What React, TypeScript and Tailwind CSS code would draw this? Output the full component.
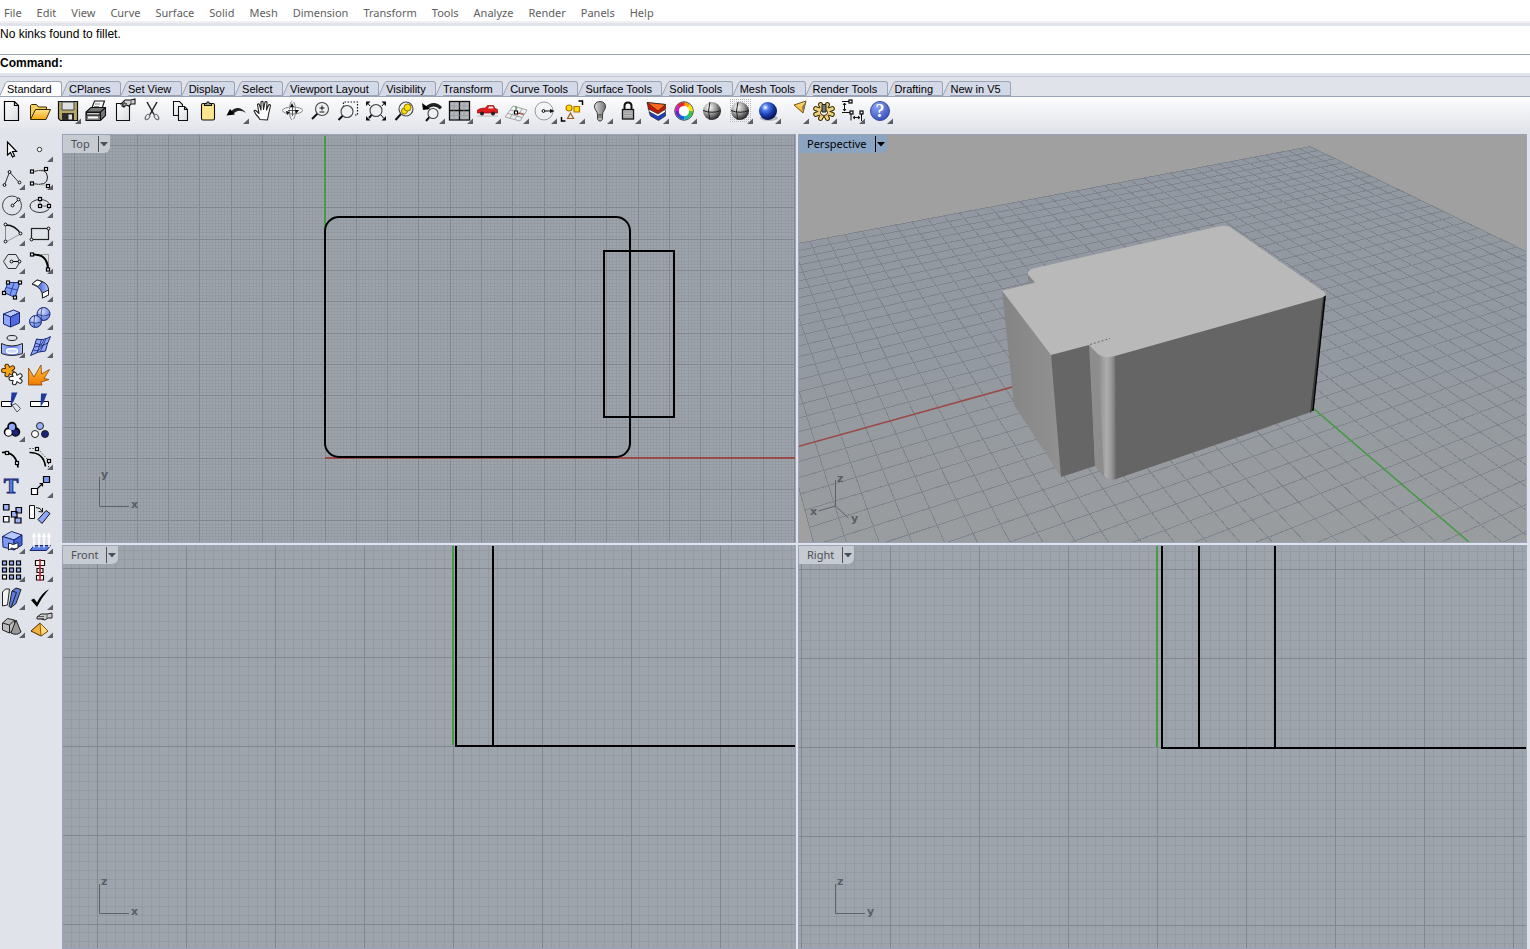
import { useState } from 'react'
import type { ReactNode } from 'react'

const MENUS = [
  'File', 'Edit', 'View', 'Curve', 'Surface', 'Solid', 'Mesh', 'Dimension',
  'Transform', 'Tools', 'Analyze', 'Render', 'Panels', 'Help',
]

const TABS = [
  'Standard', 'CPlanes', 'Set View', 'Display', 'Select', 'Viewport Layout', 'Visibility',
  'Transform', 'Curve Tools', 'Surface Tools', 'Solid Tools', 'Mesh Tools', 'Render Tools',
  'Drafting', 'New in V5',
]

type Tool = { name: string; art: ReactNode; flyout?: boolean }

// small square / round control points used by most of the curve icons
function Sq({ at }: { at: [number, number][] }) {
  return (
    <g fill="#fff" stroke="#000" strokeWidth="1.2">
      {at.map(([x, y]) => <rect key={`${x},${y}`} x={x - 1.5} y={y - 1.5} width="3" height="3" />)}
    </g>
  )
}

function Pt({ at }: { at: [number, number][] }) {
  return (
    <g fill="#fff" stroke="#000">
      {at.map(([x, y]) => <circle key={`${x},${y}`} cx={x} cy={y} r="1.4" />)}
    </g>
  )
}

function Lens({ x, y, r, tail }: { x: number; y: number; r: number; tail: [number, number] }) {
  const d = r * 0.72
  return (
    <g>
      <path d={`M${x - d} ${y + d}L${tail[0]} ${tail[1]}`} stroke="#111" strokeWidth="2" />
      <circle cx={x} cy={y} r={r} fill="#eef0f2" stroke="#444" strokeWidth="1.1" />
    </g>
  )
}

// knobbly disc: puzzle pieces and the options gear
function Cog({ x, y, rx, ry, n, w, fill, line }: {
  x: number; y: number; rx: number; ry: number; n: number; w: number; fill: string; line: string
}) {
  let d = ''
  for (let i = 0; i < n; i++) {
    const a = (i + 0.5) * 2 * Math.PI / n
    d += `M${x} ${y}L${(x + rx * Math.cos(a)).toFixed(2)} ${(y + ry * Math.sin(a)).toFixed(2)}`
  }
  return (
    <g strokeLinecap="round">
      <path d={d} stroke={line} strokeWidth={w + 2} />
      <ellipse cx={x} cy={y} rx={rx * 0.7} ry={ry * 0.7} fill={fill} stroke={line} />
      <path d={d} stroke={fill} strokeWidth={w} />
    </g>
  )
}

function WireSphere() {
  return (
    <g>
      <circle cx="12" cy="14" r="9" fill="url(#chrome)" />
      <path d="M3 13.5q9 3.5 18 0M10 5q-3 9 0 18" stroke="#222" fill="none" />
    </g>
  )
}

const TOOLBAR: Tool[] = [
  { name: 'New', art: <path d="M4.5 4.5h10l4 4v15h-14zM14.5 4.5v4h4" fill="url(#paper)" stroke="#000" strokeWidth="1.2" /> },
  {
    name: 'Open',
    art: (
      <g stroke="#3a2a00">
        <path d="M2.5 22V8.5l1-1h5l2 2.5h8v3" fill="#f4cf62" />
        <path d="M2.5 22.5l5-10h15l-4.5 10z" fill="url(#folder)" />
      </g>
    ),
  },
  {
    name: 'Save', flyout: true,
    art: (
      <g>
        <path d="M2.5 4.5h19v19h-17l-2-2z" fill="#b5a968" stroke="#111" strokeWidth="1.2" />
        <path d="M6 5h12v8H6z" fill="#dfe0e3" stroke="#444" />
        <path d="M6 16h12v7H6z" fill="#2a2a2a" />
        <path d="M12.5 17.5H16v5h-3.5z" fill="#ddd" />
      </g>
    ),
  },
  {
    name: 'Print',
    art: (
      <g stroke="#111" strokeWidth="1.1">
        <path d="M7.5 12l3-8h10l-3 9z" fill="#f6f6f6" />
        <path d="M2 15l5-4.5h14.5v8l-5 5H2z" fill="#777" />
        <path d="M2 15h14.5l5-4.5M16.5 15v8" fill="none" />
        <path d="M2.5 15.5H16V18H2.5z" fill="#ccc" />
        <path d="M4 20.5h10" stroke="#fff" strokeWidth="2" />
        <path d="M11 7h5M10 9.5h5" stroke="#888" />
      </g>
    ),
  },
  {
    name: 'Document Properties',
    art: (
      <g stroke="#111" strokeWidth="1.1">
        <path d="M4.5 6.5h13v17h-13z" fill="url(#paper)" />
        <path d="M9 7l4-4h6l4-1v5h-4l-2 2-3-1-2 2-2-1 1-2z" fill="#d4d4d4" />
        <path d="M10 6.5h5M11 8.5l4-.5M19 3v4M10 9l3-4" stroke="#555" fill="none" />
      </g>
    ),
  },
  {
    name: 'Cut',
    art: (
      <g fill="none" stroke="#222" strokeWidth="1.5">
        <path d="M7 5l7 12.5M17 5l-7 12.5" />
        <ellipse cx="7.5" cy="20" rx="1.8" ry="3" transform="rotate(35 7.5 20)" stroke="#666" strokeWidth="1.1" />
        <ellipse cx="16.5" cy="20" rx="1.8" ry="3" transform="rotate(-35 16.5 20)" stroke="#666" strokeWidth="1.1" />
      </g>
    ),
  },
  {
    name: 'Copy',
    art: (
      <g fill="url(#paper)" stroke="#111" strokeWidth="1.1">
        <path d="M5.5 4.5h6l3 3v11h-9z" />
        <path d="M10.5 9.5h6l3 3v11h-9zM16.5 9.5v3h3" />
      </g>
    ),
  },
  {
    name: 'Paste',
    art: (
      <g stroke="#111" strokeWidth="1.1">
        <rect x="5.5" y="6.5" width="13" height="16.5" rx="1.5" fill="#fbe58e" />
        <path d="M8.5 8.5v-2h2q1.5-3.5 3 0h2v2z" fill="#999" />
      </g>
    ),
  },
  {
    name: 'Undo', flyout: true,
    art: (
      <g>
        <path d="M6 15.5q8-9 16 .5-8-5-13 1.5z" fill="#222" />
        <path d="M2.5 18.5L6 12l5 5.5z" fill="#000" />
      </g>
    ),
  },
  {
    name: 'Pan',
    art: (
      <path
        d="M8 22.5q-1-2-4-5L2 14q1-1.5 3 .5l2 2-1.5-9q1.500-1.500 2 .5L9 13V5q1.500-1.500 2 0l.5 7.500L13 5q1.500-1 2 .5l-.5 7.500 2-5q1.500-1 2 .5l-2 9-1 5.500z"
        fill="#fff" stroke="#222" strokeWidth="1.1" strokeLinejoin="round"
      />
    ),
  },
  {
    name: 'Rotate View',
    art: (
      <g fill="none" stroke="#888">
        <ellipse cx="12.5" cy="13.5" rx="10" ry="3.5" />
        <ellipse cx="12.5" cy="13.5" rx="3" ry="9.5" strokeDasharray="9 2" />
        <path d="M12.5 9v10M8 13.5h9" stroke="#555" />
        <path d="M6 14l4 1-3 3zM19 13l-3 4-1-4zM12 6l2 4h-4z" fill="#111" stroke="none" />
      </g>
    ),
  },
  {
    name: 'Zoom Dynamic',
    art: (
      <g>
        <Lens x={14} y={12} r={6.5} tail={[4, 22]} />
        <path d="M11.5 11h5M14 8.5v5M11.5 15h5" stroke="#111" />
      </g>
    ),
  },
  {
    name: 'Zoom Window',
    art: (
      <g>
        <path d="M7.5 10V5h14v13h-4" fill="none" stroke="#111" strokeWidth="1.2" strokeDasharray="1.5 1.5" />
        <Lens x={11} y={14.5} r={6} tail={[2.5, 23]} />
      </g>
    ),
  },
  {
    name: 'Zoom Extents',
    art: (
      <g>
        <Lens x={12} y={13.5} r={6} tail={[5, 21]} />
        <path d="M2 9V4.5h4.5zM17.5 4.5H22V9zM22 19v4.5h-4.5zM2 19v4.5h4.5z" fill="#111" />
        <path d="M4 6.5L6 9M20 6.5L18 9M20 21.5L17 18" stroke="#111" />
      </g>
    ),
  },
  {
    name: 'Zoom Selected',
    art: (
      <g>
        <Lens x={14} y={12} r={7} tail={[3.5, 23]} />
        <circle cx="12.5" cy="14" r="3" fill="#ffe100" stroke="#8a7300" />
        <circle cx="15.5" cy="10.5" r="3.5" fill="#ffe100" stroke="#8a7300" />
      </g>
    ),
  },
  {
    name: 'Undo View Change', flyout: true,
    art: (
      <g>
        <Lens x={13} y={16.5} r={5} tail={[6, 24]} />
        <path d="M5 10q9-8 17 0l-2 2.5q-6-6-13 0z" fill="#222" />
        <path d="M2 6l1 7 7-1z" fill="#000" />
      </g>
    ),
  },
  {
    name: 'Four Viewports', flyout: true,
    art: (
      <g stroke="#111" strokeWidth="1.3">
        <rect x="1.5" y="4.5" width="20" height="18.5" fill="#b4b7bc" />
        <path d="M11.5 4.5V23M1.5 13.5h20" />
        <path d="M16 5v18M6 5v18M2 9h19M2 18.5h19" stroke="#8e9299" strokeWidth=".6" />
      </g>
    ),
  },
  {
    name: 'Set View', flyout: true,
    art: (
      <g>
        <path d="M1.5 16v-3l3-1.5 5-.5 2-2.5h6L19 11.500l2.500 1V16z" fill="#e01b1b" stroke="#8c0b0b" strokeWidth=".7" />
        <path d="M12 11.5l1-2h4l.5 2z" fill="#dfe8f2" />
        <path d="M1 19h21" stroke="#bbb" />
        <circle cx="6" cy="16.5" r="2" fill="#222" /><circle cx="17" cy="16.5" r="2" fill="#222" />
      </g>
    ),
  },
  {
    name: 'Set CPlane', flyout: true,
    art: (
      <g fill="none" stroke="#a5a5a5">
        <path d="M1 20l8-11 14 4-7 11zM4 16.5l14 4M6.5 13l14 4M5.5 21.5l8-11M10.5 22.5l8-11" />
        <path d="M12 14V9" stroke="#2b8a2b" /><path d="M13.5 16l6 1.5" stroke="#b02020" />
        <rect x="10.5" y="14" width="3" height="3" fill="#fff" stroke="#000" />
      </g>
    ),
  },
  {
    name: 'Object Snap', flyout: true,
    art: (
      <g>
        <circle cx="12" cy="14" r="9" fill="none" stroke="#999" />
        <path d="M13 14h7.5" stroke="#111" /><path d="M18 12l4.5 2-4.5 2z" fill="#111" />
        <Pt at={[[11.5, 14]]} />
      </g>
    ),
  },
  {
    name: 'Select', flyout: true,
    art: (
      <g strokeWidth="1.2">
        <circle cx="9" cy="11" r="3" fill="#ffe100" stroke="#b86e00" />
        <path d="M14 9.5h5.5V15H14z" fill="#ffe100" stroke="#b86e00" />
        <path d="M10.5 16l3 5.5h-6z" fill="none" stroke="#a0591c" />
        <path d="M18.5 4h4v4M1.5 20v4h4" fill="none" stroke="#000" strokeWidth="1.5" />
      </g>
    ),
  },
  {
    name: 'Hide Objects', flyout: true,
    art: (
      <g stroke="#444">
        <path d="M9.5 18q0-3-2-5-2-3-.5-6Q8.5 4.5 12 4.5T17 7q1.500 3-.5 6-2 2-2 5z" fill="url(#bulb)" />
        <path d="M9.5 18h5v4L13 24h-2l-1.500-2z" fill="#bbb" /><path d="M9.5 20h5" />
      </g>
    ),
  },
  {
    name: 'Lock Objects', flyout: true,
    art: (
      <g>
        <path d="M8.5 13V9q0-3.500 3.500-3.500T15.500 9v4" fill="none" stroke="#111" strokeWidth="2" />
        <rect x="6.5" y="12.5" width="11" height="9.5" fill="#b9b9b9" stroke="#111" strokeWidth="1.3" />
        <path d="M8 15h8M8 17.5h8M8 20h8" stroke="#999" />
      </g>
    ),
  },
  {
    name: 'Edit Layers', flyout: true,
    art: (
      <g stroke="#222" strokeWidth=".7">
        <path d="M5 15l1.500 4 8 4.500 7-4.500v-3.500z" fill="#1b3fc0" />
        <path d="M4 11.500L5.500 15l8.500 4.500 7.500-4.500v-2z" fill="#fff" />
        <path d="M3 5.500L4.500 12l9.500 5 7.500-5V7.500z" fill="#c41800" />
        <path d="M3 5.500l18.500 2L14 14z" fill="#ff6a1a" />
      </g>
    ),
  },
  {
    name: 'Object Properties', flyout: true,
    art: (
      <g fill="none" strokeWidth="3.6">
        <circle cx="12" cy="14" r="9.2" fill="#fff" stroke="#333" strokeWidth="1" />
        {['#ff9a00', '#ffe600', '#39c23a', '#12b9b3', '#1c5be0', '#6b25c9', '#d01ec0', '#e8202a'].map((c, i) => (
          <path key={c} d="M12 7A7 7 0 0 1 17.300 9.400" stroke={c} transform={`rotate(${i * 45} 12 14)`} />
        ))}
      </g>
    ),
  },
  { name: 'Shade', art: <WireSphere /> },
  {
    name: 'Shaded Viewport', flyout: true,
    art: <g><rect x="1" y="2" width="23" height="23" fill="url(#speckle)" /><WireSphere /></g>,
  },
  {
    name: 'Render', flyout: true,
    art: (
      <g>
        <ellipse cx="13" cy="21" rx="9" ry="3" fill="#b4b8be" />
        <circle cx="12" cy="14" r="9" fill="url(#blueBall)" />
      </g>
    ),
  },
  {
    name: 'Spotlight', flyout: true,
    art: (
      <g>
        <path d="M10 8l12-4-3 12z" fill="url(#folder)" stroke="#6b5318" />
        <path d="M22 4l-3 12-1-6z" fill="#8d7a50" />
      </g>
    ),
  },
  {
    name: 'Options', flyout: true,
    art: (
      <g>
        <Cog x={12} y={14.5} rx={9} ry={7.5} n={8} w={3} fill="#ecd27a" line="#3b2b00" />
        <ellipse cx="12" cy="15.5" rx="3.5" ry="3" fill="#f5f5f5" stroke="#3b2b00" />
        <path d="M10 7.5h4V15h-4z" fill="#777" stroke="#222" />
      </g>
    ),
  },
  {
    name: 'Dimension', flyout: true,
    art: (
      <g stroke="#111" fill="none">
        <path d="M2 4.500h8M2 15.500h9v8M21.500 16v8M4.500 6v8M3 8l1.500-2L6 8M3 12l1.500 2L6 12M13 20.500h7M15 19l-2 1.500 2 1.500M18 19l2 1.500-2 1.500" />
        <Sq at={[[10.5, 4.5], [11.5, 15.5], [21.5, 15.5]]} />
      </g>
    ),
  },
  {
    name: 'Help', flyout: true,
    art: (
      <g>
        <circle cx="12" cy="14" r="9.5" fill="url(#helpBall)" stroke="#3a4ba5" />
        <text x="12" y="20" textAnchor="middle" fontSize="18" fontWeight="700" fontFamily="Liberation Serif, serif" fill="#fff">?</text>
      </g>
    ),
  },
]

const SIDEBAR: Tool[] = [
  { name: 'Cancel', art: <path d="M7.5 7v13l3-2.500 2 4.500 2-1-2-4.500h4z" fill="#fff" stroke="#000" strokeWidth="1.2" /> },
  { name: 'Point', flyout: true, art: <circle cx="11.5" cy="14.5" r="2.2" fill="#fff" stroke="#333" /> },
  { name: 'Polyline', flyout: true, art: <g><path d="M4.500 22l5-13 10 11" fill="none" stroke="#333" /><Pt at={[[4.5, 22], [9.5, 9], [19.5, 19.5]]} /></g> },
  {
    name: 'Control Point Curve', flyout: true,
    art: <g><path d="M4 9q15-5 15.500 5T4 20.500" fill="none" stroke="#222" /><path d="M4 9l14-3M4 20.500L20 23" stroke="#aaa" strokeDasharray="1 1" /><Sq at={[[4, 8.5], [18, 6], [4, 20.5], [20, 23]]} /></g>,
  },
  { name: 'Circle', flyout: true, art: <g><circle cx="12" cy="14.5" r="9.5" fill="none" stroke="#444" /><path d="M12.500 14.500l6-6" stroke="#000" /><Pt at={[[12.5, 14.5], [18.5, 8.5]]} /></g> },
  {
    name: 'Ellipse', flyout: true,
    art: <g><ellipse cx="12" cy="15" rx="10" ry="6.5" fill="none" stroke="#333" /><path d="M12 8.500V15h9" fill="none" stroke="#666" /><Sq at={[[12, 8], [12, 15], [21, 15]]} /></g>,
  },
  {
    name: 'Arc', flyout: true,
    art: <g><path d="M5.500 23V6" stroke="#888" /><path d="M5.500 6q10 0 15 9" fill="none" stroke="#111" strokeWidth="1.3" /><path d="M20.500 15l-15 8" stroke="#999" /><Pt at={[[5.5, 5.5], [20.5, 14.5], [5.5, 22.5]]} /></g>,
  },
  { name: 'Rectangle', flyout: true, art: <g><rect x="3.5" y="9.5" width="17" height="11" fill="none" stroke="#222" strokeWidth="1.2" /><Pt at={[[20.5, 9.5], [3.5, 20.5]]} /></g> },
  {
    name: 'Polygon', flyout: true,
    art: <g><path d="M8 7.500h8l4 7-4 7H8l-4.500-7z" fill="none" stroke="#333" /><path d="M11.500 14.500h8" stroke="#000" /><Pt at={[[11.5, 14.5], [19.5, 14.5]]} /></g>,
  },
  {
    name: 'Fillet Curves', flyout: true,
    art: <g><path d="M4 7.500h16.500V23" fill="none" stroke="#999" /><path d="M4 7.500q15-1 16 14" fill="none" stroke="#000" strokeWidth="2" /><Sq at={[[4, 7.5], [20, 22.5]]} /></g>,
  },
  {
    name: 'Surface from Points', flyout: true,
    art: <g><path d="M8 7.500h12l-5 15-11-5z" fill="#7f9cf5" stroke="#1a2f8a" /><path d="M6.500 12.500l11 2.500M14 8l-4 12" stroke="#22358f" strokeWidth=".8" /><Sq at={[[8, 7.5], [20, 7.5], [4, 18], [15, 22.5]]} /></g>,
  },
  {
    name: 'Sweep', flyout: true,
    art: <g stroke="#222"><path d="M4 9l5-4q11 2 11.500 9v6l-6 3q1-10-10.500-14z" fill="url(#blueSheet)" /><path d="M4 9l5-4q3 .5 5 2l-4 4.500Q7 9.500 4 9zM14.500 23l6-3v-5l-6 3z" fill="#fff" /></g>,
  },
  {
    name: 'Box', flyout: true,
    art: <g stroke="#16256e"><path d="M3.500 11l10-4 6 2.500-9 4.500z" fill="#b7c8ff" /><path d="M3.500 11l7 3v10l-7-3z" fill="#8fa8fb" /><path d="M10.500 14l9-4.500V20l-9 4z" fill="#4e6be0" /></g>,
  },
  {
    name: 'Boolean Union', flyout: true,
    art: (
      <g stroke="#16256e">
        <circle cx="15.5" cy="11" r="6.5" fill="url(#blueSoft)" /><circle cx="7.5" cy="18.5" r="6" fill="url(#blueSoft)" />
        <path d="M9.500 11.500q6 3 12 0M2 19q5 2.500 11 0M14 5q-2 6 0 12M6.500 13q-1 6 0 11" fill="none" strokeWidth=".7" />
      </g>
    ),
  },
  {
    name: 'Project to Surface', flyout: true,
    art: (
      <g stroke="#222">
        <ellipse cx="12" cy="7" rx="5" ry="2.5" fill="none" />
        <path d="M1.500 12.500q10 5 21 0v10q-11 4-21 0z" fill="url(#blueSheet)" />
        <ellipse cx="12" cy="20" rx="5.5" ry="2.5" fill="#cddafe" stroke="#fff" strokeWidth="1.5" />
      </g>
    ),
  },
  {
    name: 'Rebuild Surface', flyout: true,
    art: <g stroke="#16256e"><path d="M8.500 8q7 2 14-2.500-4 8-5 14.500-7 0-15 4.500 4-8 6-16.500z" fill="#8fa8fb" /><path d="M6 16q7 0 14-4M13.500 8.500L9 22M18 7.500l-5.500 13M7 12l6 2 3-5M5 19l5 1 6-7" fill="none" strokeWidth=".8" /></g>,
  },
  {
    name: 'Join',
    art: (
      <g>
        <Cog x={8.5} y={11.5} rx={5} ry={4.5} n={5} w={3} fill="#f7a51e" line="#4d2d00" />
        <Cog x={16} y={19.5} rx={5} ry={4.5} n={5} w={3} fill="#fff" line="#222" />
      </g>
    ),
  },
  { name: 'Explode', art: <path d="M.5 26V9L6 18 13 6l.5 9 8-4.500L16 19.500l5 1-8 2.500 1 3z" fill="url(#fire)" stroke="#8a4300" strokeWidth=".8" /> },
  {
    name: 'Trim',
    art: <g><path d="M1.500 14.500h10v5h-10z" fill="#fff" stroke="#000" /><path d="M12 18l4-1.500 4.500 5L17 25z" fill="none" stroke="#555" /><path d="M11.500 5.500h6l-4 9-3 4z" fill="#1f3a9c" /></g>,
  },
  { name: 'Split', art: <g><path d="M2.500 14.500h18v5h-18z" fill="#fff" stroke="#000" /><path d="M13 6.500h6l-3.500 9-3 4.500z" fill="#1f3a9c" /></g> },
  {
    name: 'Group', flyout: true,
    art: <g><g stroke="#000" strokeWidth="2.5"><circle cx="12" cy="11.5" r="3.5" /><circle cx="8.5" cy="17" r="3.5" /><circle cx="15.5" cy="17" r="3.5" /></g><circle cx="8.5" cy="17.5" r="3.2" fill="#fff" /><circle cx="15.5" cy="17.5" r="3.2" fill="#1a237a" /><circle cx="12" cy="12" r="3.2" fill="#8fa8fb" /></g>,
  },
  {
    name: 'Ungroup',
    art: <g stroke="#222"><circle cx="12" cy="11" r="3.5" fill="#9db2fb" /><circle cx="7" cy="19" r="3.5" fill="#fff" /><circle cx="17" cy="19" r="3.5" fill="#1a237a" /></g>,
  },
  { name: 'Edit Points', art: <g><path d="M2 9.500q14-1 16 15" fill="none" stroke="#000" strokeWidth="1.7" /><Sq at={[[7, 10], [17, 20]]} /></g> },
  {
    name: 'Control Points', flyout: true,
    art: <g><path d="M1.500 9.500q14 0 16 14" fill="none" stroke="#000" strokeWidth="1.7" /><path d="M1.500 5.500h8l11 12v7" fill="none" stroke="#000" strokeDasharray="1 2" /><Sq at={[[9, 6], [21, 18]]} /></g>,
  },
  {
    name: 'Text',
    art: <text x="11" y="22" textAnchor="middle" fontSize="22" fontWeight="700" fontFamily="Liberation Serif, serif" fill="#5b7de0" stroke="#16256e" strokeWidth=".9">T</text>,
  },
  {
    name: 'Move', flyout: true,
    art: <g stroke="#000" strokeWidth="1.2"><path d="M3.500 17.500h6v6h-6z" fill="#fff" /><path d="M15.500 5.500h6v6h-6z" fill="#7f9cf5" /><path d="M9.500 17.500l5-5M11.500 12.500h3v3" fill="none" /></g>,
  },
  {
    name: 'Copy Objects',
    art: <g stroke="#000" strokeWidth="1.2" fill="#9db2fb"><path d="M3.500 5.500H9V11H3.500zM16 8.500h5.500V14H16zM11.500 12.500H17V18h-5.500zM15 19h6v5h-6z" /><path d="M3.500 17.500H9V23H3.500z" fill="#fff" /></g>,
  },
  {
    name: 'Rotate',
    art: <g stroke="#111"><path d="M1.500 6.500h5v13h-5z" fill="#fff" /><path d="M10 20.500l8-9 4 3-8 10z" fill="#8fa8fb" /><path d="M8 8.500q5 0 6 4M14.500 9v4l-4-.5" fill="none" /></g>,
  },
  {
    name: 'Solid Tools', flyout: true,
    art: <g stroke="#16256e"><path d="M2.500 9.500l9-5L22 8l-8 5z" fill="#b7c8ff" /><path d="M2.500 9.500L14 13v10L3 20z" fill="#7f9bf5" /><path d="M14 13l8-5v10l-8 5z" fill="#4462d8" /><path d="M8.500 23v-7l5 1.500 4.500-2v5.500l-4 1-2-1z" fill="#fff" stroke="#222" /></g>,
  },
  {
    name: 'Extrude Surface', flyout: true,
    art: <g><path d="M6 18.500h16.500l-4 5H2z" fill="#5b7de0" stroke="#16256e" /><path d="M6 20.500V8M11 20.500V8M16 20.500V8M21 20V8M4.500 10L6 7l1.500 3M9.500 10L11 7l1.500 3M14.500 10L16 7l1.500 3M19.500 10L21 7l1.500 3" fill="none" stroke="#fff" strokeWidth="1.5" /></g>,
  },
  {
    name: 'Array', flyout: true,
    art: (
      <g stroke="#000" strokeWidth="1.2">
        {[6, 13, 20].map(y => [2.5, 9.5, 16.5].map(x => (
          <rect key={`${x},${y}`} x={x} y={y} width="4" height="4" fill={x === 2.5 && y === 20 ? '#fff' : '#9db2fb'} />
        )))}
      </g>
    ),
  },
  {
    name: 'Align', flyout: true,
    art: <g stroke="#111" fill="#fff" strokeWidth="1.2"><path d="M7.500 5.500h9v5h-9zM9 13.500h6v4H9zM8.500 20.500h7V25h-7z" /><path d="M12 4v22" stroke="#e01020" strokeWidth="1.6" /></g>,
  },
  {
    name: 'Flow', flyout: true,
    art: <g stroke="#222"><path d="M2.500 9l3-3h4l-2 16-5 1z" fill="#f2f2f2" /><path d="M12 8l4-3 5 1.500-5 14-5 4-2-1z" fill="#5b7de0" /><path d="M12 8l4.500 1.500-5.500 15" fill="none" /></g>,
  },
  { name: 'Check Objects', flyout: true, art: <path d="M3 17l3-1.500 3 4Q13.500 10 21 6q-7 8-12 18z" fill="#000" /> },
  {
    name: 'Primitives', flyout: true,
    art: <g stroke="#222"><path d="M2.500 12l5-4.500 7 1.500v9l-5 4-7-3z" fill="#bbb" /><path d="M2.500 12l7 2 5-5M9.500 14v8" fill="none" /><path d="M16 9l5 12q-4 4-10 1z" fill="#999" /></g>,
  },
  {
    name: 'Edit Solids', flyout: true,
    art: <g><path d="M3 20l9-8 8 8-7 5z" fill="#f7b13a" stroke="#3d2700" /><path d="M12 12l1 13 7-5z" fill="#ffd98a" stroke="#8a5a00" /><path d="M9 6l4-3h6l5-1v5h-4l-3 2-4-1H9z" fill="#ccc" stroke="#222" /><path d="M10 5.500h6M11 7.500h5M19 3v4" stroke="#555" /></g>,
  },
]

function Defs() {
  return (
    <svg className="absolute h-0 w-0" aria-hidden="true">
      <defs>
        <linearGradient id="paper" x1="0" y1="0" x2="1" y2="1"><stop offset="0" stopColor="#fff" /><stop offset="1" stopColor="#d9dbde" /></linearGradient>
        <linearGradient id="folder" x1="0" y1="0" x2="0" y2="1"><stop offset="0" stopColor="#ffe48a" /><stop offset="1" stopColor="#f6a614" /></linearGradient>
        <linearGradient id="fire" x1="0" y1="0" x2="0" y2="1"><stop offset="0" stopColor="#ffc63c" /><stop offset="1" stopColor="#f07800" /></linearGradient>
        <linearGradient id="blueSheet"><stop offset="0" stopColor="#a9bdff" /><stop offset=".5" stopColor="#5676e4" /><stop offset="1" stopColor="#b8c8ff" /></linearGradient>
        <linearGradient id="bulb"><stop offset="0" stopColor="#ddd" /><stop offset="1" stopColor="#6d6d6d" /></linearGradient>
        <radialGradient id="chrome" cx=".35" cy=".3" r=".75"><stop offset="0" stopColor="#fff" /><stop offset=".5" stopColor="#9a9a9a" /><stop offset="1" stopColor="#1c1c1c" /></radialGradient>
        <radialGradient id="blueBall" cx=".35" cy=".3" r=".75"><stop offset="0" stopColor="#fff" /><stop offset=".25" stopColor="#4f7be8" /><stop offset=".6" stopColor="#1638a8" /><stop offset="1" stopColor="#050a38" /></radialGradient>
        <radialGradient id="blueSoft" cx=".35" cy=".3" r=".8"><stop offset="0" stopColor="#dfe7ff" /><stop offset="1" stopColor="#4f6fe0" /></radialGradient>
        <radialGradient id="helpBall" cx=".35" cy=".25" r=".9"><stop offset="0" stopColor="#8fa4f2" /><stop offset="1" stopColor="#2a43b8" /></radialGradient>
        <pattern id="speckle" width="2" height="2" patternUnits="userSpaceOnUse"><rect width="1" height="1" fill="#b5b8be" /></pattern>
      </defs>
    </svg>
  )
}

function ToolButton({ tool }: { tool: Tool }) {
  return (
    <button type="button" aria-label={tool.name} className="h-7 w-7 shrink-0">
      <svg width="28" height="28" viewBox="0 0 28 28" aria-hidden="true">
        {tool.art}
        {tool.flyout && <path d="M25 21.500V27h-6z" fill="#5c5f66" />}
      </svg>
    </button>
  )
}

function Tab({ label, active, onClick }: { label: string; active: boolean; onClick: () => void }) {
  return (
    <button type="button" role="tab" aria-selected={active} onClick={onClick} className="flex h-[15px] flex-auto">
      <svg width="7" height="15" className="shrink-0" aria-hidden="true">
        <path d="M0 15L6 1.500 7 .5V15z" fill={active ? '#fdfdfe' : '#d4d9e8'} />
        <path d="M0 14.500L5.500 2l2-1.500" fill="none" stroke="#9aa2b5" />
      </svg>
      <span className={`h-[15px] flex-auto rounded-tr-[3px] border-t border-r border-[#9aa2b5] pr-2 text-left leading-[15px] whitespace-nowrap ${active ? 'bg-[#fdfdfe]' : 'border-b bg-[#d4d9e8]'}`}>
        {label}
      </span>
    </button>
  )
}

// lines through the origin every `step` pixels, snapped to the pixel grid
function gridPath(ox: number, oy: number, step: number) {
  let d = ''
  for (let i = Math.ceil(-ox / step); ox + i * step < 2600; i++) d += `M${Math.floor(ox + i * step) + 0.5} 0V1600`
  for (let i = Math.ceil(-oy / step); oy + i * step < 1600; i++) d += `M0 ${Math.floor(oy + i * step) + 0.5}H2600`
  return d
}

function OrthoGrid({ x, y, major }: { x: number; y: number; major: number }) {
  return (
    <g fill="none" shapeRendering="crispEdges">
      <path d={gridPath(x, y, major / 10)} stroke="#939aa2" />
      <path d={gridPath(x, y, major)} stroke="#83878f" />
    </g>
  )
}

function AxisIcon({ y, up, across }: { y: number; up: string; across: string }) {
  return (
    <g fill="#5b5e63" fontFamily="DejaVu Sans, sans-serif" fontSize="11" fontWeight="700">
      <path d={`M36.500 ${y - 29}V${y + 0.5}H66`} fill="none" stroke="#5f6267" />
      <text x="38" y={y - 28}>{up}</text>
      <text x="68" y={y + 2}>{across}</text>
    </g>
  )
}

// ground plane in grid squares -> screen, from the origin and the two vanishing points
function project(gx: number, gy: number) {
  const a = -0.0094 * gx
  const b = -0.0177 * gy
  const w = 1 + a + b
  return `${((422 + 2290 * a - 182 * b) / w).toFixed(1)} ${((194 - 325 * (a + b)) / w).toFixed(1)}`
}

function PerspectiveScene() {
  let lines = ''
  for (let i = -20; i <= 20; i++) {
    lines += `M${project(i, -20)}L${project(i, 20)}M${project(-20, i)}L${project(20, i)}`
  }
  return (
    <g>
      <defs>
        <linearGradient id="ground" x1="0" y1="0" x2="0" y2="420" gradientUnits="userSpaceOnUse">
          <stop offset="0" stopColor="#9098a1" /><stop offset=".5" stopColor="#9399a1" /><stop offset="1" stopColor="#9a9d9f" />
        </linearGradient>
        <linearGradient id="side"><stop offset="0" stopColor="#848484" /><stop offset="1" stopColor="#919191" /></linearGradient>
        <linearGradient id="corner"><stop offset="0" stopColor="#8b8b8b" /><stop offset=".45" stopColor="#adadad" /><stop offset=".7" stopColor="#989898" /><stop offset="1" stopColor="#666" /></linearGradient>
      </defs>
      <path d={`M${project(-20, -20)}L${project(20, -20)} ${project(20, 20)} ${project(-20, 20)}z`} fill="url(#ground)" />
      <path d={lines} fill="none" stroke="#80858d" shapeRendering="crispEdges" />
      <path d={`M${project(0, 0)}L${project(20, 0)}`} stroke="#9a4a48" strokeWidth="1.6" />
      <path d={`M${project(0, 0)}L${project(0, 20)}`} stroke="#489a48" strokeWidth="1.6" />

      <path d="M229 139v7l8 2z" fill="#858585" />
      <path d="M203 155l50 65 9 122-47-72z" fill="url(#side)" />
      <path d="M252 219l39-10 5 122-34 11z" fill="#666" />
      <path d="M290 209l10 12 6 122-10-12z" fill="#8d8d8d" />
      <path d="M299 219l17 1 2 124q-7 2-13-3z" fill="url(#corner)" />
      <path d="M316 220l210-59-14 116-195 67z" fill="#656565" />
      <path d="M524 162l3-2-12.500 115-3.500 3z" fill="#3a3a3a" />
      <path d="M526 161l-12 115" stroke="#000" strokeWidth="1.3" />
      <path
        d="M203 155.500l31-7 2-1-7-8q-1-4 5-6l185-42q10-2 14 2l93 64q2 3-3 5L316 221q-11 3-17-2l-9-9-38 10z"
        fill="#b9b9b9"
      />
      <path d="M291 209.500l20-6" stroke="#666" strokeDasharray="2 2" />

      <g fill="#5b5e63" fontFamily="DejaVu Sans, sans-serif" fontSize="11" fontWeight="700">
        <path d="M36.500 345v26l-17 5M36.500 371l13 12" fill="none" stroke="#5f6267" />
        <text x="38" y="347">z</text>
        <text x="11" y="380">x</text>
        <text x="52" y="387">y</text>
      </g>
    </g>
  )
}

function Viewport({ name, active, children }: { name: string; active?: boolean; children: ReactNode }) {
  return (
    <section aria-label={name} className={`relative overflow-hidden border border-[#9aa3b7] ${active ? 'bg-[#a0a0a0]' : 'bg-[#9da4ab]'}`}>
      <svg className="absolute inset-0 h-full w-full" aria-hidden="true">{children}</svg>
      <button
        type="button"
        className={`relative flex h-[18px] items-center rounded-br-md pl-2 font-['Noto_Sans'] text-[11px] leading-[18px] ${active ? 'bg-[#8ba4c2] text-black' : 'bg-[#c6cad1] text-[#4b4f57]'}`}
      >
        {name}
        <span className="ml-2 h-4 w-px bg-current" />
        <svg width="10" height="6" className="mr-px" aria-hidden="true">
          <path d="M1 1h8L5 5.500z" fill="currentColor" />
        </svg>
      </button>
    </section>
  )
}

export default function App() {
  const [tab, setTab] = useState('Standard')

  return (
    <div className="flex min-h-screen flex-col bg-[#e0e3ea] font-['Liberation_Sans',sans-serif] text-black">
      <Defs />
      <nav className="flex h-[23px] gap-[15px] border-b-2 border-[#f0f0f2] bg-white pt-[4px] pl-1 font-['Noto_Sans'] text-[11px] leading-[18px] text-[#606060]">
        {MENUS.map(m => <button key={m} type="button" className="h-[18px]">{m}</button>)}
      </nav>

      <div className="mt-[3px] bg-white text-[12px]">
        <p className="h-7 leading-4">No kinks found to fillet.</p>
        <div className="flex h-[19px] items-start border-t border-[#9aa2b5]">
          <label htmlFor="command" className="font-bold leading-4">Command:</label>
          <input id="command" type="text" className="ml-1 h-4 flex-1 outline-none" />
        </div>
      </div>

      <div className="mt-[3px] border-t border-[#c3c8d3] pt-1">
        <div className="border-b border-[#9aa2b5]">
          <div role="tablist" className="flex w-[1011px] text-[11px]">
            {TABS.map(t => <Tab key={t} label={t} active={t === tab} onClick={() => setTab(t)} />)}
          </div>
        </div>
      </div>
      <div role="toolbar" aria-label="Standard" className="flex h-[37px] bg-linear-to-b from-[#fcfcfd] to-[#dfe2e9]">
        {TOOLBAR.map(t => <ToolButton key={t.name} tool={t} />)}
      </div>

      <main className="flex flex-1">
        <div role="toolbar" aria-label="Main" className="grid w-[62px] shrink-0 grid-cols-[28px_28px] content-start pt-px">
          {SIDEBAR.map(t => <ToolButton key={t.name} tool={t} />)}
        </div>
        <div className="grid flex-1 grid-cols-[734fr_729fr] grid-rows-[409fr_404fr] gap-[2px] pr-[3px]">
          <Viewport name="Top">
            <OrthoGrid x={262} y={323.3} major={31.3} />
            <path d="M262 1v92" stroke="#489a48" strokeWidth="2" />
            <path d="M262 323h2000" stroke="#9a4a48" strokeWidth="2" />
            <rect x="262" y="82" width="305" height="240" rx="14" fill="none" stroke="#000" strokeWidth="2" />
            <rect x="541" y="116" width="70" height="166" fill="none" stroke="#000" strokeWidth="2" />
            <AxisIcon y={371} up="y" across="x" />
          </Viewport>
          <Viewport name="Perspective" active>
            <PerspectiveScene />
          </Viewport>
          <Viewport name="Front">
            <OrthoGrid x={390.3} y={200.3} major={88.9} />
            <path d="M390 0v199" stroke="#489a48" strokeWidth="2" />
            <path d="M393 0v200H2400M430 0v200" fill="none" stroke="#000" strokeWidth="2" />
            <AxisIcon y={367} up="z" across="x" />
          </Viewport>
          <Viewport name="Right">
            <OrthoGrid x={358.3} y={201.5} major={89} />
            <path d="M358 0v201" stroke="#489a48" strokeWidth="2" />
            <path d="M363 0v202H2400M400 0v202M476 0v202" fill="none" stroke="#000" strokeWidth="2" />
            <AxisIcon y={367} up="z" across="y" />
          </Viewport>
        </div>
      </main>
    </div>
  )
}
